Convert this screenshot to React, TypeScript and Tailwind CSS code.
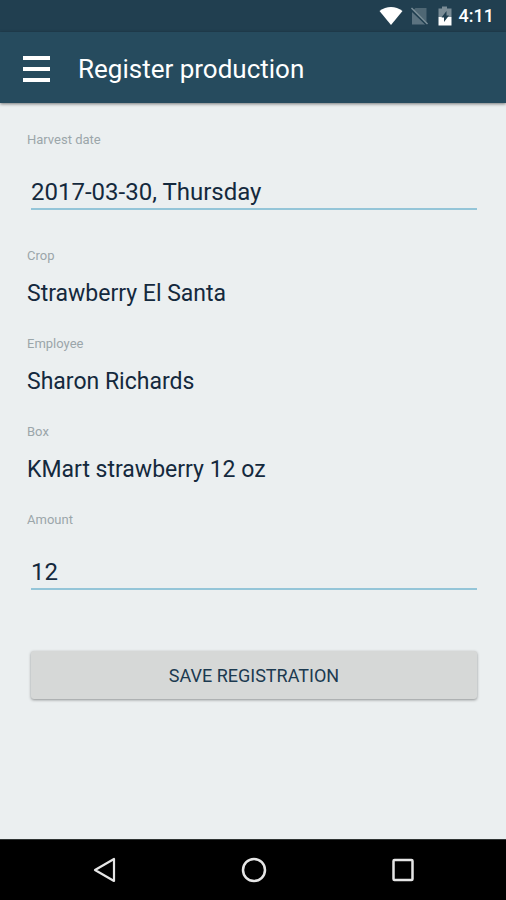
import { useState } from "react";

function StatusBar() {
  return (
    <div className="flex h-8 items-center justify-end bg-[#213f50] pr-3 text-white">
      <svg className="mr-[6px] h-5 w-6" viewBox="0 0 24 20" fill="currentColor" aria-hidden="true">
        <path d="M12 19 0.500 5C4 2.200 8 1 12 1s8 1.200 11.500 4z" />
      </svg>
      <svg className="mr-2 h-5 w-5" viewBox="0 0 20 20" aria-hidden="true">
        <path d="M6.500 2H17.500v14L4.500 4z" fill="#4f6774" />
        <path d="M3 6v12.500h13.500z" fill="#5c7380" />
        <path d="M1.500 3 17.500 19" stroke="#213f50" strokeWidth="1.500" />
        <path d="M2.500 2 18.500 18" stroke="#7d909a" strokeWidth="1.500" />
      </svg>
      <svg className="mr-[6px] h-5 w-4" viewBox="0 0 16 20" aria-hidden="true">
        <path d="M5 0.500h5v2h4.500v8.500h-13V2.500H5z" fill="#7a8c96" />
        <path d="M1.500 11h13v8.500h-13z" fill="#fff" />
        <path d="M9.500 5v4.500H12L7 16v-4.500H4.500z" fill="#213f50" />
      </svg>
      <span className="text-[18px] leading-6 font-medium">4:11</span>
    </div>
  );
}

function Header() {
  return (
    <header className="relative flex h-[71px] items-center bg-[#264b5e] pt-[2px] pl-[23px] text-white shadow-[0_1px_3px_rgba(0,0,0,0.5)]">
      <button type="button" aria-label="Open menu" className="mr-7 flex w-[27px] flex-col gap-[7px]">
        <span className="h-1 w-full bg-white" />
        <span className="h-1 w-full bg-white" />
        <span className="h-1 w-full bg-white" />
      </button>
      <h1 className="text-[26px] leading-8">Register production</h1>
    </header>
  );
}

const labelClass = "block text-[13px] leading-4 text-[#9ba6aa]";

function InputField({ id, label, initial }: { id: string; label: string; initial: string }) {
  const [value, setValue] = useState(initial);
  return (
    <div>
      <label htmlFor={id} className={labelClass}>
        {label}
      </label>
      <div className="mt-[25px] pr-[2px] pl-1">
        <input
          id={id}
          value={value}
          onChange={(e) => setValue(e.target.value)}
          className="block h-[37px] w-full border-b-2 border-[#94c5d8] bg-transparent pt-[2px] text-[24px] text-[#14293d] outline-none"
        />
      </div>
    </div>
  );
}

function ValueField({ label, value }: { label: string; value: string }) {
  return (
    <div>
      <dt className={labelClass}>{label}</dt>
      <dd className="mt-[14px] text-[23px] leading-8 text-[#14293d]">{value}</dd>
    </div>
  );
}

function NavBar() {
  return (
    <nav className="flex h-[61px] items-center justify-around border-t border-[#303434] bg-black pr-7 pl-[30px] text-[#e6e6e6]">
      <button type="button" aria-label="Back">
        <svg className="h-7 w-7" viewBox="0 0 28 28" fill="none" stroke="currentColor" strokeWidth="2.200" strokeLinejoin="round">
          <path d="M23 3v22L4 14z" />
        </svg>
      </button>
      <button type="button" aria-label="Home">
        <svg className="h-7 w-7" viewBox="0 0 28 28" fill="none" stroke="currentColor" strokeWidth="2.500">
          <circle cx="14" cy="14" r="11" />
        </svg>
      </button>
      <button type="button" aria-label="Recent apps">
        <svg className="h-7 w-7" viewBox="0 0 28 28" fill="none" stroke="currentColor" strokeWidth="2.500">
          <rect x="4.500" y="4" width="19" height="20" rx="1" />
        </svg>
      </button>
    </nav>
  );
}

export default function App() {
  return (
    <div className="flex min-h-screen flex-col bg-[#ebeff0] font-[Roboto,sans-serif]">
      <StatusBar />
      <Header />
      <main className="grow px-[27px] pt-[29px]">
        <form onSubmit={(e) => e.preventDefault()}>
          <InputField id="harvest-date" label="Harvest date" initial="2017-03-30, Thursday" />
          <dl className="mt-[38px] mb-[26px] flex flex-col gap-[26px]">
            <ValueField label="Crop" value="Strawberry El Santa" />
            <ValueField label="Employee" value="Sharon Richards" />
            <ValueField label="Box" value="KMart strawberry 12 oz" />
          </dl>
          <InputField id="amount" label="Amount" initial="12" />
          <div className="mt-[61px] pr-[2px] pl-1">
            <button
              type="submit"
              className="h-12 w-full rounded-[3px] bg-[#d6d8d7] text-[18px] text-[#1c3a50] shadow-[0_1px_3px_rgba(0,0,0,0.4)]"
            >
              SAVE REGISTRATION
            </button>
          </div>
        </form>
      </main>
      <NavBar />
    </div>
  );
}
